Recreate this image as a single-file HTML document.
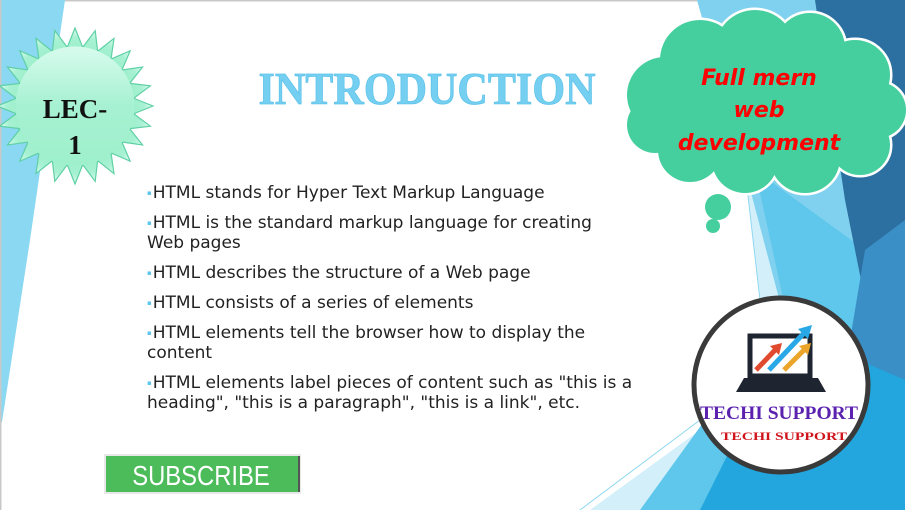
<!DOCTYPE html>
<html><head><meta charset="utf-8"><style>
html,body{margin:0;padding:0;}
body{width:910px;height:510px;position:relative;overflow:hidden;background:#fff;font-family:"DejaVu Sans",Verdana,sans-serif;}
.b{position:absolute;left:147px;font-size:17px;color:#222;line-height:20px;letter-spacing:0;}
.b:before{content:"▪";color:#5ec6ea;font-size:7px;vertical-align:3px;margin-right:1px;}
</style></head><body>
<svg width="910" height="510" style="position:absolute;left:0;top:0">
<defs>
<linearGradient id="sg" x1="0" y1="0" x2="0" y2="1"><stop offset="0" stop-color="#d8fbee"/><stop offset="0.5" stop-color="#a6f1d2"/><stop offset="1" stop-color="#9ef0cc"/></linearGradient>
</defs>
<rect x="0" y="0" width="910" height="1.5" fill="#c8c8c8"/>
<rect x="0" y="0" width="1.5" height="510" fill="#c8c8c8"/>
<polygon points="1.5,0 65,0 30,240 2,422 1.5,422" fill="#8ad8f2"/>
<polygon points="697,0 910,0 910,510 590,510 700,430 760,300 745,170" fill="#d3f0fa"/>
<polygon points="697,0 818,0 870,290 790,340 745,170" fill="#80d1ef"/>
<polygon points="755,170 865,250 830,510 640,510 705,420 790,330" fill="#5fc7eb"/>
<polygon points="815,0 905,0 905,360 865,300 845,200" fill="#2c6fa1"/>
<polygon points="865,250 905,220 905,430 850,340" fill="#3a8fc6"/>
<polygon points="790,330 905,380 905,510 700,510" fill="#22a6dd"/>
<rect x="905" y="0" width="5" height="510" fill="#fff"/>
<line x1="580" y1="510" x2="700" y2="420" stroke="#8fd7f2" stroke-width="1"/>
<line x1="745" y1="170" x2="760" y2="300" stroke="#8fd7f2" stroke-width="1"/>
<g transform="translate(75,106)">
<g fill="url(#sg)" stroke="#5fd0a5" stroke-width="1.2">
<polygon points="-8,-58 0,-78 8,-58"/><polygon transform="rotate(15)" points="-8,-58 0,-78 8,-58"/><polygon transform="rotate(30)" points="-8,-58 0,-78 8,-58"/><polygon transform="rotate(45)" points="-8,-58 0,-78 8,-58"/><polygon transform="rotate(60)" points="-8,-58 0,-78 8,-58"/><polygon transform="rotate(75)" points="-8,-58 0,-78 8,-58"/><polygon transform="rotate(90)" points="-8,-58 0,-78 8,-58"/><polygon transform="rotate(105)" points="-8,-58 0,-78 8,-58"/><polygon transform="rotate(120)" points="-8,-58 0,-78 8,-58"/><polygon transform="rotate(135)" points="-8,-58 0,-78 8,-58"/><polygon transform="rotate(150)" points="-8,-58 0,-78 8,-58"/><polygon transform="rotate(165)" points="-8,-58 0,-78 8,-58"/><polygon transform="rotate(180)" points="-8,-58 0,-78 8,-58"/><polygon transform="rotate(195)" points="-8,-58 0,-78 8,-58"/><polygon transform="rotate(210)" points="-8,-58 0,-78 8,-58"/><polygon transform="rotate(225)" points="-8,-58 0,-78 8,-58"/><polygon transform="rotate(240)" points="-8,-58 0,-78 8,-58"/><polygon transform="rotate(255)" points="-8,-58 0,-78 8,-58"/><polygon transform="rotate(270)" points="-8,-58 0,-78 8,-58"/><polygon transform="rotate(285)" points="-8,-58 0,-78 8,-58"/><polygon transform="rotate(300)" points="-8,-58 0,-78 8,-58"/><polygon transform="rotate(315)" points="-8,-58 0,-78 8,-58"/><polygon transform="rotate(330)" points="-8,-58 0,-78 8,-58"/><polygon transform="rotate(345)" points="-8,-58 0,-78 8,-58"/>
</g>
<circle r="59.5" fill="url(#sg)"/>
<text x="0" y="12" text-anchor="middle" font-family="Liberation Serif,serif" font-weight="bold" font-size="27" fill="#111">LEC-</text>
<text x="0" y="48" text-anchor="middle" font-family="Liberation Serif,serif" font-weight="bold" font-size="27" fill="#111">1</text>
</g>
<text x="427" y="104" text-anchor="middle" font-family="Liberation Serif,serif" font-weight="bold" font-size="46" fill="#74cff0" stroke="#5fc3ea" stroke-width="0.8" textLength="337" lengthAdjust="spacingAndGlyphs">INTRODUCTION</text>
<g stroke="#fff" stroke-width="5" fill="#fff">
<ellipse cx="765" cy="105" rx="120" ry="65"/>
<circle cx="665" cy="95" r="38"/><circle cx="700" cy="60" r="40"/><circle cx="755" cy="50" r="40"/><circle cx="810" cy="48" r="35"/><circle cx="855" cy="75" r="35"/><circle cx="878" cy="110" r="28"/><circle cx="860" cy="145" r="30"/><circle cx="805" cy="158" r="35"/><circle cx="745" cy="160" r="33"/><circle cx="690" cy="150" r="32"/><circle cx="655" cy="125" r="28"/>
<circle cx="718" cy="207" r="13"/><circle cx="713" cy="226" r="7"/>
</g>
<g fill="#45cf9f">
<ellipse cx="765" cy="105" rx="120" ry="65"/>
<circle cx="665" cy="95" r="38"/><circle cx="700" cy="60" r="40"/><circle cx="755" cy="50" r="40"/><circle cx="810" cy="48" r="35"/><circle cx="855" cy="75" r="35"/><circle cx="878" cy="110" r="28"/><circle cx="860" cy="145" r="30"/><circle cx="805" cy="158" r="35"/><circle cx="745" cy="160" r="33"/><circle cx="690" cy="150" r="32"/><circle cx="655" cy="125" r="28"/>
<circle cx="718" cy="207" r="13"/><circle cx="713" cy="226" r="7"/>
</g>
<g font-family="DejaVu Sans,sans-serif" font-style="italic" font-weight="bold" font-size="22" fill="#f00" text-anchor="middle">
<text x="759" y="85">Full mern</text>
<text x="759" y="117">web</text>
<text x="759" y="150">development</text>
</g>
<circle cx="781" cy="385" r="87" fill="#fff" stroke="#3a3a3a" stroke-width="5"/>
<rect x="750" y="336" width="60" height="40" fill="none" stroke="#1e2530" stroke-width="5"/>
<polygon points="744,378 818,378 826,392 736,392" fill="#1e2530"/>
<line x1="756" y1="370" x2="778" y2="347" stroke="#e04a2e" stroke-width="5"/><polygon points="782,343 770,346 779,355" fill="#e04a2e"/>
<line x1="769" y1="370" x2="805" y2="332" stroke="#29a8e8" stroke-width="5"/><polygon points="812,325 798,329 808,339" fill="#29a8e8"/>
<line x1="784" y1="370" x2="806" y2="348" stroke="#eaa52a" stroke-width="5"/><polygon points="811,343 799,346 808,355" fill="#eaa52a"/>
<text x="779" y="419" text-anchor="middle" font-family="Liberation Serif,serif" font-weight="bold" font-size="19" fill="#5b22b0" textLength="158" lengthAdjust="spacingAndGlyphs">TECHI SUPPORT</text>
<text x="784" y="440" text-anchor="middle" font-family="Liberation Serif,serif" font-weight="bold" font-size="12" fill="#d0141c" textLength="126" lengthAdjust="spacingAndGlyphs">TECHI SUPPORT</text>
<rect x="104" y="454" width="197" height="40" fill="#e8e8e8"/>
<rect x="106" y="456" width="192" height="36" fill="#4cbb5a"/>
<rect x="298" y="456" width="2" height="36" fill="#555"/>
<text transform="translate(201,485) scale(0.85,1)" text-anchor="middle" font-family="Liberation Sans,sans-serif" font-size="28" fill="#fff">SUBSCRIBE</text>
</svg>
<div class="b" style="top:183px">HTML stands for Hyper Text Markup Language</div>
<div class="b" style="top:213px">HTML is the standard markup language for creating<br>Web pages</div>
<div class="b" style="top:263px">HTML describes the structure of a Web page</div>
<div class="b" style="top:293px">HTML consists of a series of elements</div>
<div class="b" style="top:323px">HTML elements tell the browser how to display the<br>content</div>
<div class="b" style="top:373px">HTML elements label pieces of content such as "this is a<br>heading", "this is a paragraph", "this is a link", etc.</div>
</body></html>
